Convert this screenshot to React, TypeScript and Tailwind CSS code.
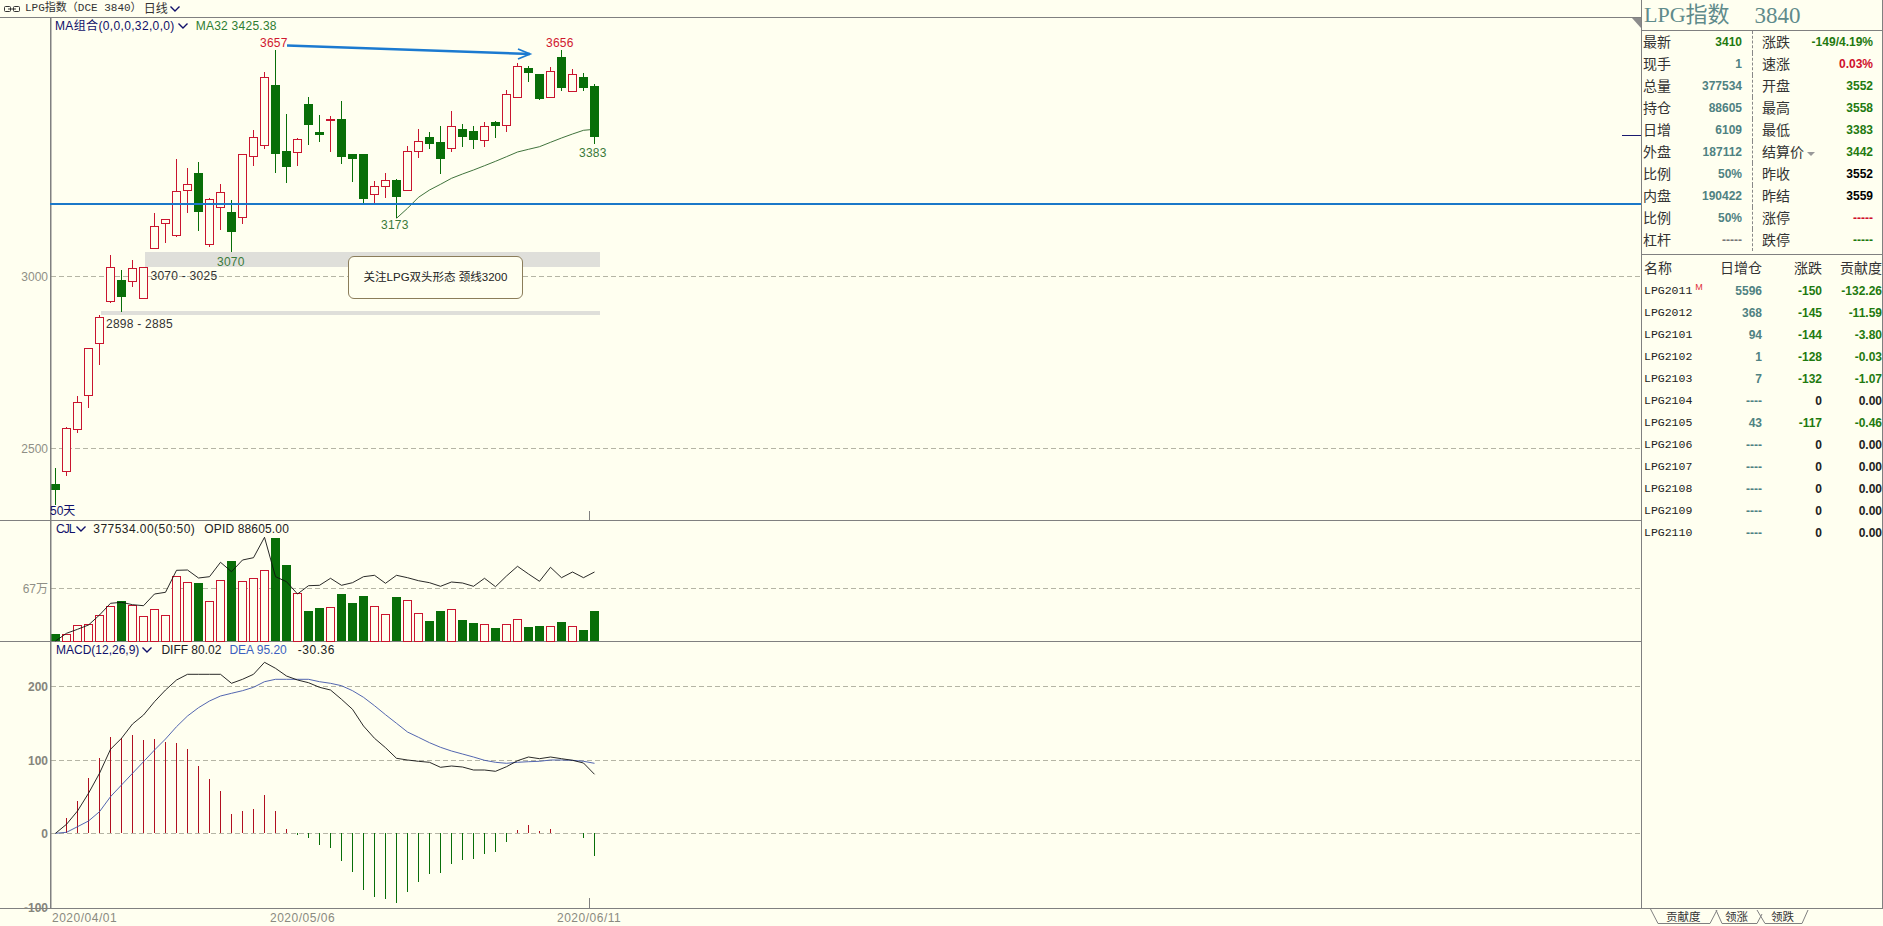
const RED = "#c9152f";
const GREEN = "#086e08";

// page px: body top, body bottom, wick top, wick bottom, color
const candles: [number, number, number, number, "r" | "g"][] = [
  [484, 489, 468, 505, "g"],
  [428, 471, 427, 476, "r"],
  [402, 429, 396, 433, "r"],
  [348, 395, 348, 408, "r"],
  [317, 343, 315, 365, "r"],
  [267, 301, 255, 303, "r"],
  [280, 296, 270, 312, "g"],
  [268, 281, 260, 287, "r"],
  [267, 298, 267, 299, "r"],
  [226, 248, 213, 248, "r"],
  [219, 223, 219, 243, "r"],
  [191, 235, 159, 237, "r"],
  [184, 190, 168, 213, "r"],
  [173, 211, 162, 231, "g"],
  [199, 244, 198, 247, "r"],
  [192, 207, 184, 230, "r"],
  [212, 231, 200, 252, "g"],
  [154, 217, 154, 224, "r"],
  [137, 156, 130, 166, "r"],
  [77, 145, 72, 149, "r"],
  [85, 153, 50, 173, "g"],
  [151, 166, 114, 183, "g"],
  [139, 152, 138, 166, "r"],
  [104, 124, 97, 145, "g"],
  [132, 134, 115, 142, "g"],
  [119, 120, 116, 152, "r"],
  [119, 156, 101, 164, "g"],
  [154, 158, 154, 182, "g"],
  [154, 198, 154, 203, "g"],
  [186, 194, 181, 203, "r"],
  [180, 186, 173, 198, "r"],
  [180, 196, 179, 218, "g"],
  [151, 190, 146, 191, "r"],
  [141, 151, 129, 158, "r"],
  [137, 143, 132, 149, "g"],
  [142, 158, 126, 174, "g"],
  [126, 148, 111, 152, "r"],
  [129, 136, 124, 147, "g"],
  [131, 139, 126, 149, "g"],
  [126, 140, 122, 147, "r"],
  [122, 125, 121, 138, "g"],
  [94, 125, 90, 132, "r"],
  [66, 97, 63, 97, "r"],
  [68, 72, 66, 82, "g"],
  [74, 98, 74, 100, "g"],
  [71, 97, 67, 97, "r"],
  [57, 87, 50, 91, "g"],
  [74, 91, 69, 91, "r"],
  [77, 87, 73, 91, "g"],
  [86, 136, 84, 144, "g"],
];

const volumeTops = [
  634, 634, 625, 624, 615, 606, 601, 605, 616, 609, 615, 576, 582, 583, 601, 580, 561, 581, 578, 570, 538, 565, 593,
  611, 608, 607, 594, 603, 596, 606, 614, 597, 600, 613, 621, 611, 609, 620, 623, 624, 628, 624, 619, 627, 626, 626,
  622, 626, 630, 611,
];

// the lines below were read off at 3x, so y = offset + v / 3
const opid = [
  393, 370, 358, 345, 315, 280, 277, 284, 287, 252, 247, 181, 180, 204, 200, 157, 185, 150, 143, 82, 200, 215, 252, 227,
  226, 205, 226, 218, 200, 196, 220, 196, 203, 212, 218, 229, 216, 219, 229, 205, 230, 198, 169, 192, 214, 172, 203,
  186, 203, 186,
];
const diff = [
  580, 553, 513, 460, 400, 328, 295, 252, 225, 185, 150, 120, 103, 103, 103, 103, 130, 118, 103, 67, 85, 108, 120, 128,
  142, 150, 178, 208, 258, 295, 323, 355, 360, 364, 367, 382, 378, 381, 390, 390, 394, 380, 362, 351, 356, 351, 356,
  361, 369, 403,
];
const dea = [
  580, 577, 560, 543, 515, 470, 435, 400, 365, 330, 297, 260, 228, 203, 183, 168, 160, 152, 142, 125, 118, 118, 118,
  118, 125, 130, 137, 152, 172, 197, 224, 250, 276, 292, 308, 322, 333, 342, 351, 361, 367, 370, 367, 365, 364, 360,
  360, 361, 364, 370,
];
const macdBars = [
  580, 535, 483, 414, 355, 292, 295, 286, 300, 297, 306, 309, 327, 378, 417, 453, 522, 513, 507, 465, 513, 567, 585,
  593, 614, 623, 662, 695, 749, 770, 776, 790, 755, 725, 701, 698, 671, 659, 656, 641, 635, 605, 571, 555, 573, 567,
  578, 580, 593, 647,
];
const ma32 = [
  655, 625, 592, 570, 553, 535, 522, 510, 497, 484, 470, 456, 448, 440, 427, 414, 402, 391, 388,
];

const cx = (i: number) => 55.5 + 11 * i;
const toPoints = (vals: number[], offset: number, start = 0) =>
  vals.map((v, i) => `${cx(i + start)},${(offset + v / 3).toFixed(1)}`).join(" ");

const infoRows = [
  ["最新", "3410", "text-[#1f7a10]", "涨跌", "-149/4.19%", "text-[#1f7a10]"],
  ["现手", "1", "text-[#4f8282]", "速涨", "0.03%", "text-[#d0102c]"],
  ["总量", "377534", "text-[#4f8282]", "开盘", "3552", "text-[#1f7a10]"],
  ["持仓", "88605", "text-[#4f8282]", "最高", "3558", "text-[#1f7a10]"],
  ["日增", "6109", "text-[#4f8282]", "最低", "3383", "text-[#1f7a10]"],
  ["外盘", "187112", "text-[#4f8282]", "结算价", "3442", "text-[#1f7a10]"],
  ["比例", "50%", "text-[#4f8282]", "昨收", "3552", "text-black"],
  ["内盘", "190422", "text-[#4f8282]", "昨结", "3559", "text-black"],
  ["比例", "50%", "text-[#4f8282]", "涨停", "-----", "text-[#d0102c]"],
  ["杠杆", "-----", "text-[#777777]", "跌停", "-----", "text-[#1f7a10]"],
];

const contracts = [
  ["LPG2011", "5596", "-150", "-132.26"],
  ["LPG2012", "368", "-145", "-11.59"],
  ["LPG2101", "94", "-144", "-3.80"],
  ["LPG2102", "1", "-128", "-0.03"],
  ["LPG2103", "7", "-132", "-1.07"],
  ["LPG2104", "----", "0", "0.00"],
  ["LPG2105", "43", "-117", "-0.46"],
  ["LPG2106", "----", "0", "0.00"],
  ["LPG2107", "----", "0", "0.00"],
  ["LPG2108", "----", "0", "0.00"],
  ["LPG2109", "----", "0", "0.00"],
  ["LPG2110", "----", "0", "0.00"],
];

function Chevron() {
  return (
    <svg width="10" height="6" viewBox="0 0 10 6" className="shrink-0">
      <polyline points="0.5,0.5 5,5 9.5,0.5" fill="none" stroke="#10106a" strokeWidth="1.4" />
    </svg>
  );
}

function GridLine({ y }: { y: number }) {
  return <line x1="51" x2="1641" y1={y + 0.5} y2={y + 0.5} stroke="#b5b5a5" strokeDasharray="5 3" />;
}

function Axis({ y, children, bold }: { y: number; children: string; bold?: boolean }) {
  return (
    <text
      x="48"
      y={y + 1}
      textAnchor="end"
      dominantBaseline="central"
      className={bold ? "fill-[#85857c] text-[12px] font-bold" : "fill-[#8f8f86] text-[12px]"}
    >
      {children}
    </text>
  );
}

function ChartLabel({ x, y, color, children }: { x: number; y: number; color: string; children: string }) {
  return (
    <text x={x} y={y + 1} dominantBaseline="central" fill={color} className="text-[12px] tracking-[0.25px]">
      {children}
    </text>
  );
}

function MainPane() {
  return (
    <div className="relative h-[503px] border-b border-[#808080]">
      <svg viewBox="0 18 1641 502" className="block h-[502px] w-[1641px] overflow-visible">
        <GridLine y={276} />
        <GridLine y={448} />
        <rect x="145" y="252" width="455" height="15" fill="#dfdfda" />
        <rect x="101" y="311" width="499" height="4" fill="#dfdfda" />
        <polyline points={toPoints(ma32, 0, 31)} fill="none" stroke="#0f4f0f" strokeWidth="0.8" />
        <g shapeRendering="crispEdges">
          {candles.map(([top, bottom, wickTop, wickBottom, c], i) => {
            const color = c === "r" ? RED : GREEN;
            const mid = cx(i);
            return (
              <g key={i}>
                <line x1={mid} x2={mid} y1={wickTop} y2={wickBottom} stroke={color} />
                {c === "r" ? (
                  <rect x={mid - 4} y={top + 0.5} width="8" height={bottom - top} fill="#fffff0" stroke={color} />
                ) : (
                  <rect x={mid - 4.5} y={top} width="9" height={bottom - top + 1} fill={color} />
                )}
              </g>
            );
          })}
        </g>
        <rect x="50" y="18" width="1.5" height="502" fill="#808080" />
        <rect x="50" y="203" width="1591" height="2" fill="#1b78c9" />
        <polygon points="1632,18 1641,18 1641,28" fill="#8c8c8c" />
        <line x1="1622" x2="1641" y1="135.5" y2="135.5" stroke="#1a1a70" />
        <line x1="589.5" x2="589.5" y1="511" y2="520" stroke="#808080" />
        <polyline points="287,45.5 530,54" fill="none" stroke="#1b7ad0" strokeWidth="2.4" />
        <polyline points="518,49 530,54 518,59" fill="none" stroke="#1b7ad0" strokeWidth="1.8" />
        <Axis y={276}>3000</Axis>
        <Axis y={448}>2500</Axis>
        <ChartLabel x={260} y={42} color="#d0182f">3657</ChartLabel>
        <ChartLabel x={546} y={42} color="#d0182f">3656</ChartLabel>
        <ChartLabel x={579} y={152} color="#3a7a3a">3383</ChartLabel>
        <ChartLabel x={381} y={224} color="#3a7a3a">3173</ChartLabel>
        <ChartLabel x={217} y={261} color="#3a7a3a">3070</ChartLabel>
        <ChartLabel x={150.5} y={275} color="#333333">3070 - 3025</ChartLabel>
        <ChartLabel x={106} y={323} color="#333333">2898 - 2885</ChartLabel>
      </svg>
      <div className="absolute left-[55px] top-0 flex h-[16px] items-center text-[12px]">
        <span className="tracking-[0.35px] text-[#10106a]">MA组合(0,0,0,32,0,0)</span>
        <span className="ml-[3px]"><Chevron /></span>
        <span className="ml-[8px] tracking-[0.25px] text-[#2e7d32]">MA32 3425.38</span>
      </div>
      <div className="absolute left-[50px] top-[484px] text-[12px] leading-[18px] text-[#10106a]">50天</div>
      <div className="absolute left-[348px] top-[238px] flex h-[43px] w-[175px] items-center justify-center rounded-[6px] border border-[#8b7d5a] bg-[#fffff0] text-[11.5px] text-[#222222]">
        关注LPG双头形态 颈线3200
      </div>
    </div>
  );
}

function VolumePane() {
  return (
    <div className="relative h-[121px] border-b border-[#808080]">
      <svg viewBox="0 521 1641 120" className="block h-[120px] w-[1641px] overflow-visible">
        <GridLine y={588} />
        <g shapeRendering="crispEdges">
          {volumeTops.map((top, i) =>
            candles[i][4] === "r" ? (
              <rect key={i} x={cx(i) - 4} y={top + 0.5} width="8" height={641 - top} fill="#fffff0" stroke={RED} />
            ) : (
              <rect key={i} x={cx(i) - 4.5} y={top} width="9" height={641 - top} fill={GREEN} />
            ),
          )}
        </g>
        <polyline points={toPoints(opid, 510)} fill="none" stroke="#111111" strokeWidth="0.9" />
        <rect x="50" y="521" width="1.5" height="120" fill="#808080" />
        <Axis y={588}>67万</Axis>
      </svg>
      <div className="absolute left-[56px] top-0 flex h-[16px] items-center text-[12px] text-[#222222]">
        <span className="tracking-[-1px] text-[#10106a]">CJL</span>
        <span className="ml-[2px]"><Chevron /></span>
        <span className="ml-[7px] tracking-[0.45px]">377534.00(50:50)</span>
        <span className="ml-[9px] tracking-[0.15px]">OPID 88605.00</span>
      </div>
    </div>
  );
}

function MacdPane() {
  return (
    <div className="relative h-[267px] border-b border-[#808080]">
      <svg viewBox="0 642 1641 266" className="block h-[266px] w-[1641px] overflow-visible">
        <GridLine y={686} />
        <GridLine y={760} />
        <GridLine y={833} />
        <g shapeRendering="crispEdges">
          {macdBars.map((v, i) => (
            <line
              key={i}
              x1={cx(i)}
              x2={cx(i)}
              y1={640 + v / 3}
              y2={833}
              stroke={i < 22 || (i > 41 && i < 47) ? "#b01020" : GREEN}
            />
          ))}
        </g>
        <polyline points={toPoints(dea, 640)} fill="none" stroke="#3f55a8" strokeWidth="0.9" />
        <polyline points={toPoints(diff, 640)} fill="none" stroke="#111111" strokeWidth="0.9" />
        <rect x="50" y="642" width="1.5" height="266" fill="#808080" />
        <line x1="589.5" x2="589.5" y1="898" y2="908" stroke="#808080" />
        <Axis y={686} bold>200</Axis>
        <Axis y={760} bold>100</Axis>
        <Axis y={833} bold>0</Axis>
        <Axis y={907} bold>-100</Axis>
      </svg>
      <div className="absolute left-[56px] top-0 flex h-[16px] items-center text-[12px] text-[#222222]">
        <span className="text-[#10106a]">MACD(12,26,9)</span>
        <span className="ml-[3px]"><Chevron /></span>
        <span className="ml-[9px]">DIFF 80.02</span>
        <span className="ml-[8px] text-[#3b5fbf]">DEA 95.20</span>
        <span className="ml-[11px] tracking-[0.5px]">-30.36</span>
      </div>
    </div>
  );
}

function Tabs() {
  return (
    <div className="relative h-[17px]">
      <svg width="242" height="17" className="absolute left-0 top-0">
        <polyline points="9.5,0 17,14.5 69,14.5 76,1" fill="none" stroke="#808080" />
        <polyline points="75,1 81,14.5 116,14.5 121,5" fill="none" stroke="#808080" />
        <polyline points="116,1 124,14.5 161,14.5 167,1" fill="none" stroke="#808080" />
      </svg>
      <div className="absolute left-[25px] top-0 text-[11.5px] leading-[16px] text-[#333333]">贡献度</div>
      <div className="absolute left-[84px] top-0 text-[11.5px] leading-[16px] text-[#333333]">领涨</div>
      <div className="absolute left-[130px] top-0 text-[11.5px] leading-[16px] text-[#333333]">领跌</div>
    </div>
  );
}

function SidePanel() {
  return (
    <div className="flex w-[242px] flex-col">
      <div className="h-[909px] overflow-hidden border-b border-l border-r border-[#808080]">
        <div className="flex h-[31px] items-center border-b border-[#808080] pl-[2px] text-[22px] leading-none text-[#5f8b8b] [font-family:'Liberation_Serif','Noto_Sans_CJK_SC',serif]">
          <span>LPG指数</span>
          <span className="ml-[25px] text-[23px]">3840</span>
        </div>
        <div className="h-[224px] border-b border-[#808080]">
          {infoRows.map(([l, lv, lc, r, rv, rc]) => (
            <div key={l + r} className="flex h-[22px] items-center">
              <div className="flex h-full w-[111px] items-center justify-between border-r border-dashed border-[#888888] pl-[1px] pr-[10px]">
                <span className="text-[14px] text-[#333333]">{l}</span>
                <span className={`text-[12px] font-bold ${lc}`}>{lv}</span>
              </div>
              <div className="flex flex-1 items-center justify-between pl-[9px] pr-[9px]">
                <span className="flex items-center text-[14px] text-[#333333]">
                  {r}
                  {r === "结算价" && <span className="ml-[3px] mt-[3px] h-0 w-0 border-x-[4px] border-t-[4px] border-x-transparent border-t-[#999999]" />}
                </span>
                <span className={`text-[12px] font-bold ${rc}`}>{rv}</span>
              </div>
            </div>
          ))}
        </div>
        <div className="grid h-[25px] grid-cols-[70px_50px_60px_60px] items-center pt-[1px] text-[14px] text-[#333333]">
          <span className="pl-[2px]">名称</span>
          <span className="whitespace-nowrap text-right">日增仓</span>
          <span className="text-right">涨跌</span>
          <span className="whitespace-nowrap text-right">贡献度</span>
        </div>
        {contracts.map(([name, oi, chg, contrib]) => {
          const isFlat = chg === "0";
          return (
            <div key={name} className="grid h-[22px] grid-cols-[70px_50px_60px_60px] items-center text-[12px] font-bold">
              <span className="flex items-start pl-[2px] text-[11.5px] font-normal text-[#222222] [font-family:'Liberation_Mono',monospace]">
                {name}
                {name === "LPG2011" && <span className="ml-[3px] text-[9px] leading-[10px] text-[#e0303a] [font-family:'Liberation_Sans',sans-serif]">M</span>}
              </span>
              <span className="text-right text-[#4f8282]">{oi}</span>
              <span className={isFlat ? "text-right text-[#222222]" : "text-right text-[#1f7a10]"}>{chg}</span>
              <span className={isFlat ? "text-right text-[#222222]" : "text-right text-[#1f7a10]"}>{contrib}</span>
            </div>
          );
        })}
      </div>
      <Tabs />
    </div>
  );
}

export default function App() {
  return (
    <div className="flex h-[926px] w-[1883px] overflow-hidden bg-[#fffff0] [font-family:'Liberation_Sans','Noto_Sans_CJK_SC',sans-serif]">
      <div className="flex w-[1641px] flex-col">
        <div className="flex h-[18px] items-center border-b border-[#808080] pl-[4px] text-[#333333]">
          <svg width="16" height="6" viewBox="0 0 16 6">
            <rect x="0.5" y="0.5" width="6" height="5" rx="1" fill="none" stroke="#333333" />
            <rect x="9.5" y="0.5" width="6" height="5" rx="1" fill="none" stroke="#333333" />
            <line x1="4" x2="12" y1="3" y2="3" stroke="#333333" />
          </svg>
          <span className="ml-[5px] text-[11px] [font-family:'Liberation_Mono','Noto_Sans_CJK_SC',monospace]">LPG指数（DCE 3840）</span>
          <span className="ml-[2px] text-[12px]">日线</span>
          <span className="ml-[2px]"><Chevron /></span>
        </div>
        <MainPane />
        <VolumePane />
        <MacdPane />
        <div className="flex h-[17px] items-center pl-[52px] text-[12px] tracking-[0.5px] text-[#8a8a80]">
          <span className="w-[218px]">2020/04/01</span>
          <span className="w-[287px]">2020/05/06</span>
          <span>2020/06/11</span>
        </div>
      </div>
      <SidePanel />
    </div>
  );
}
